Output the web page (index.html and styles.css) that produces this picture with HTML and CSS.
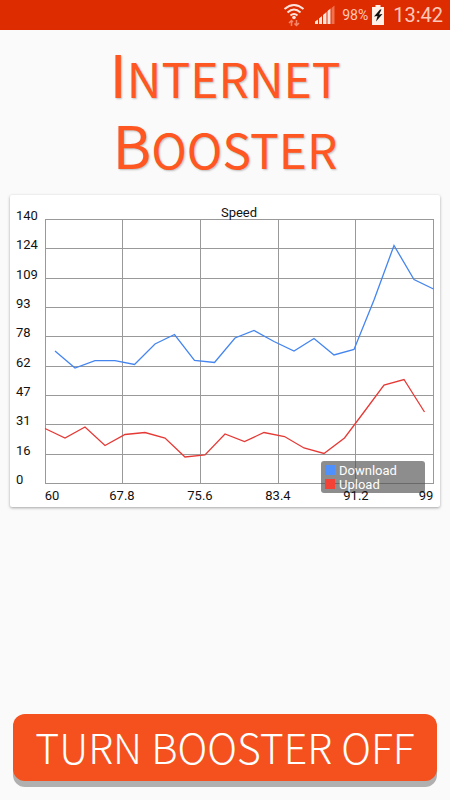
FILE: index.html
```html
<!DOCTYPE html>
<html lang="en">
<head>
    <meta charset="UTF-8">
    <meta name="viewport" content="width=device-width, initial-scale=1.0">
    <title>Internet Booster</title>
    <link rel="stylesheet" href="styles.css">
</head>
<body>

<header class="status-bar">
    <svg class="wifi" width="22" height="24" viewBox="0 0 22 24" fill="none" stroke="#ffe4dc" stroke-width="2">
        <path d="M1.500 6Q11-2 20.500 6M4.500 9.500Q11 3.500 17.500 9.500M7.500 12.500Q11 9.500 14.500 12.500"/>
        <circle cx="11" cy="14.500" r="1.800" fill="#ffe4dc" stroke="none"/>
        <path d="M8.500 23V17.500M6 20L8.500 17.500L10 19M13.500 17V22.500M11.500 20.500L13.500 22.500L16 20" stroke="#f4866a" stroke-width="1.500"/>
    </svg>
    <svg class="signal" width="20" height="20" viewBox="0 0 20 20">
        <path d="M0 19v-2.500l3-2V19zM4 19v-5.500l3-2.500v8zM8 19v-9l3.500-3v12zM12.500 19V6l3-2.500V19z" fill="#ffe4dc"/>
        <path d="M16.500 19V3l3-2.500V19z" fill="#f4704c"/>
    </svg>
    <span class="percent">98%</span>
    <svg class="battery" width="12" height="20" viewBox="0 0 12 20">
        <path d="M3.500 0h5v2H12v18H0V2h3.500z" fill="#fff0e8"/>
        <path d="M8 4.500L2 11.500L5.500 11L4 16.500L10.500 9L7 9.500L9.500 4.500z" fill="#111"/>
    </svg>
    <span class="clock">13:42</span>
</header>

<main class="container">
    <h1><span class="cap">I</span>NTERNET<br><span class="cap">B</span>OOSTER</h1>

    <div class="card">
        <svg class="chart" viewBox="0 0 430 312" role="img" aria-label="Speed">
            <path class="grid" d="M35 24.500H424M35 53.500H424M35 83.500H424M35 112.500H424M35 141.500H424M35 171.500H424M35 200.500H424M35 229.500H424M35 259.500H424M35 288.500H424"/>
            <path class="grid" d="M35.500 24V289M112.500 24V289M190.500 24V289M268.500 24V289M345.500 24V289M423.500 24V289"/>

            <polyline class="line download" points="45,156 65,173 85,165.700 105,165.700 124.500,169.500 145,149 164.500,139.500 184.500,165.500 204.500,167.500 225,143 244,135.500 264,146.500 284,156 304,143.500 324,160 344,154.500 364,105 384,50.500 404,84.500 423.500,94"/>
            <polyline class="line upload" points="35,233.500 55,243 75,232 95,250.500 115,239.500 135,237.500 155,243 175,262 195,260 215,239 234.500,246.500 254,237.500 274.500,241.500 294,253 314,258.500 334.500,243 354,217 374,190 394,184.500 414.500,217"/>

            <g class="label">
                <text x="6" y="25">140</text>
                <text x="6" y="54">124</text>
                <text x="6" y="84">109</text>
                <text x="6" y="113">93</text>
                <text x="6" y="142">78</text>
                <text x="6" y="172">62</text>
                <text x="6" y="201">47</text>
                <text x="6" y="230">31</text>
                <text x="6" y="260">16</text>
                <text x="6" y="289">0</text>
            </g>

            <rect class="legend" x="311" y="266" width="104" height="32" rx="3"/>
            <rect class="download-key" x="315" y="270" width="10" height="10"/>
            <rect class="upload-key" x="315" y="284" width="10" height="10"/>
            <text class="legend-text" x="329" y="280">Download</text>
            <text class="legend-text" x="329" y="294">Upload</text>

            <g class="label middle">
                <text x="229" y="22">Speed</text>
                <text x="42" y="305">60</text>
                <text x="112" y="305">67.8</text>
                <text x="190" y="305">75.6</text>
                <text x="268" y="305">83.4</text>
                <text x="346" y="305">91.2</text>
                <text x="416" y="305">99</text>
            </g>
        </svg>
    </div>

    <button class="booster" type="button">TURN BOOSTER OFF</button>
</main>

</body>
</html>
```
FILE: styles.css
```css
* {
    box-sizing: border-box;
}
body {
    font-family: Roboto, sans-serif;
    margin: 0;
    min-height: 100vh;
    display: flex;
    flex-direction: column;
    background-color: #fafafa;
}
.status-bar {
    display: flex;
    align-items: center;
    justify-content: flex-end;
    height: 30px;
    padding: 0 7px;
    background-color: #dd2c00;
    color: #ffc8b8;
}
.signal {
    margin-left: 10px;
}
.percent {
    margin-left: 7px;
    font-size: 14px;
}
.battery {
    margin-left: 4px;
}
.clock {
    margin-left: 9px;
    font-size: 20px;
}
.container {
    flex: 1;
    display: flex;
    flex-direction: column;
    padding: 12px 10px 19px;
}
h1 {
    margin: 0 0 11px;
    text-align: center;
    font-family: "Noto Sans CJK JP", sans-serif;
    font-size: 48px;
    font-weight: 400;
    line-height: 71px;
    color: #ff5722;
    text-shadow: 1px 1px 2px rgba(0, 0, 0, 0.25);
}
.cap {
    font-size: 59px;
    line-height: 0;
}
.card {
    background-color: white;
    border-radius: 2px;
    box-shadow: 0 1px 3px rgba(0, 0, 0, 0.35);
}
.chart {
    display: block;
    width: 100%;
}
.grid {
    fill: none;
    stroke: #999;
}
.line {
    fill: none;
    stroke-width: 1.3px;
}
.download {
    stroke: #4485f0;
}
.upload {
    stroke: #e53935;
}
.label {
    font-size: 13px;
    fill: #111;
}
.middle {
    text-anchor: middle;
}
.legend {
    fill: #505050;
    fill-opacity: 0.65;
}
.download-key {
    fill: #4d90fe;
}
.upload-key {
    fill: #f44336;
}
.legend-text {
    font-size: 13px;
    fill: white;
}
.booster {
    height: 67px;
    margin: auto 3px 0;
    padding: 0 0 2px;
    border: none;
    border-radius: 12px;
    background-color: #f4511e;
    box-shadow: 0 6px 0 #b0b0b0;
    color: white;
    font-family: "Noto Sans CJK JP", sans-serif;
    font-size: 41px;
    font-weight: 300;
    line-height: 63px;
    white-space: nowrap;
    cursor: pointer;
}
```
